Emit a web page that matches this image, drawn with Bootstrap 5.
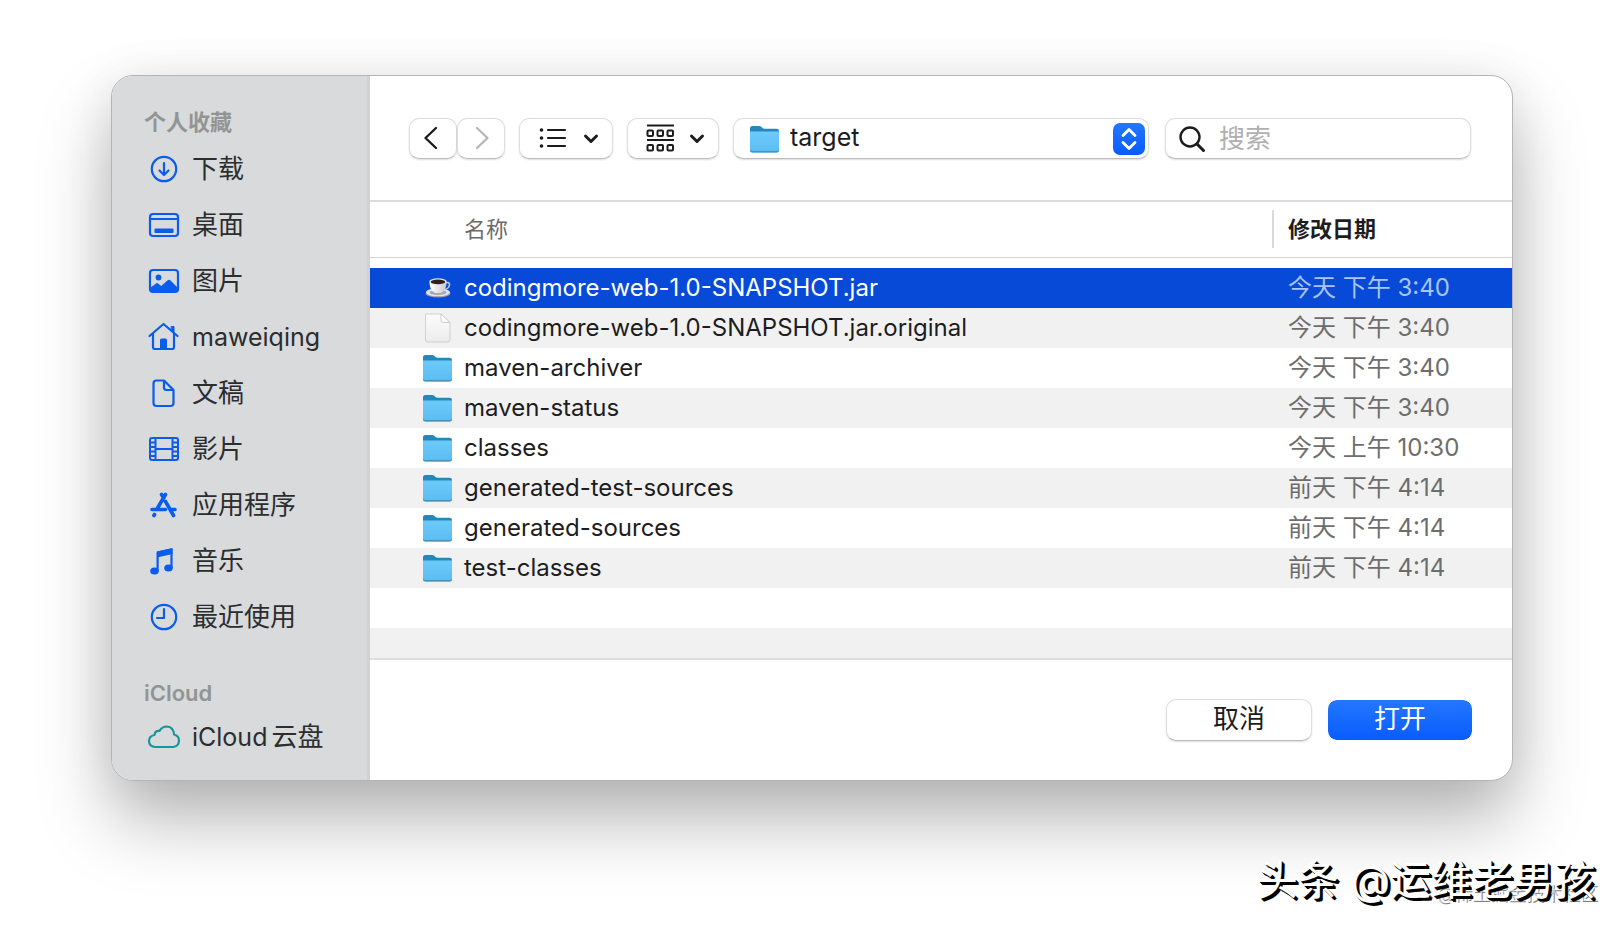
<!DOCTYPE html>
<html lang="zh-CN">
<head>
<meta charset="utf-8">
<meta name="viewport" content="width=device-width, initial-scale=1">
<title>target</title>
<link href="https://cdn.jsdelivr.net/npm/bootstrap@5.3.0/dist/css/bootstrap.min.css" rel="stylesheet">
<style>
  body { font-family: Inter, "Noto Sans CJK SC", sans-serif; font-size: 24px; line-height: 40px; color: #1d1d1f; background: #fff; }
  .stage { padding: 75px 111px 20px; }
  .dialog { border-radius: 22px; background: #fff; overflow: hidden; border: 1px solid #b4b4b5; box-shadow: 0 40px 72px rgba(0,0,0,.28), 0 4px 50px rgba(0,0,0,.08); }

  /* Sidebar */
  .side { flex: 0 0 258px; background: #d8dadb; border-right: 3px solid #d0d2d3; padding: 28px 0 14px 32px; }
  .side h2 { font-size: 22px; line-height: 37px; font-weight: 700; color: #929495; margin: 0; }
  .side h2.latin { font-weight: 600; padding-top: 31px; line-height: 34px; }
  .side a { display: flex; align-items: center; height: 56px; color: #2c2d2e; text-decoration: none; font-size: 26px; }
  .side h2.latin + a { height: 54px; }
  .side a .en { font-size: 25px; }
  .side svg { width: 38px; height: 32px; margin-right: 10px; color: #0a5cec; flex: none; }
  .side .cloud { color: #16979d; }

  /* Main pane */
  .pane { min-width: 0; }
  .tools { padding: 42px 41px 41px 39px; gap: 14px; }
  .ctl { height: 41px; border: 1px solid #dedede; border-bottom-color: #bcbcbc; border-radius: 10px; background: #fff; box-shadow: 0 1px 2px rgba(0,0,0,.14); padding: 0; color: #1c1c1c; display: flex; align-items: center; justify-content: center; }
  .nav-step { width: 48px; }
  .view-list { width: 94px; gap: 16px; padding-left: 6px; }
  .view-group { width: 92px; gap: 14px; padding-left: 4px; }
  .place { flex: 1 1 auto; position: relative; }
  .place select { appearance: none; width: 100%; height: 100%; border: 0; border-radius: 10px; background: transparent; padding: 0 48px 3px 56px; font-size: 25px; line-height: 36px; color: inherit; }
  .place .folder { position: absolute; left: 14px; top: 5px; pointer-events: none; }
  .place .stepper { position: absolute; right: 3px; top: 4px; pointer-events: none; }
  .find { flex: 0 0 306px; min-width: 0; margin-left: 2px; justify-content: flex-start; padding-left: 12px; gap: 13px; }
  .find input { border: 0; background: transparent; flex: 1 1 0; min-width: 0; height: 38px; padding: 0; font-size: 26px; color: inherit; }
  .find input::placeholder { color: #b0b0b0; opacity: 1; }

  /* File list */
  .listing { border-top: 2px solid #dbdbdb; border-bottom: 2px solid #dedede; }
  .files { width: 100%; table-layout: fixed; border-collapse: separate; border-spacing: 0; }
  .files .date-col { width: 240px; }
  .files th { height: 56px; border-bottom: 1px solid #d4d4d4; font-size: 22px; line-height: 38px; padding: 0 0 2px; font-weight: 400; color: #6b6b6b; vertical-align: middle; }
  .files th:first-child { padding-left: 94px; }
  .files th.sorted { font-weight: 700; color: #1d1d1f; }
  .files th.sorted span { display: block; border-left: 2px solid #dadada; padding-left: 14px; }
  .files tbody::before { content: ""; display: block; height: 10px; }
  .files td { height: 40px; padding: 0; line-height: 38px; font-size: 24px; white-space: nowrap; }
  .files td:first-child { padding-left: 51px; }
  .files td:last-child { padding-left: 16px; color: #6d6d6d; }
  .files tbody tr:nth-child(even) td { background: #f1f1f1; }
  .files tr.picked td, .files tr.picked td:last-child { background: #084ad8; color: #fff; }
  .files tr.picked td:last-child { color: #a9c5fb; }
  .files tr.cut td { height: 30px; }
  .files svg { width: 34px; height: 30px; margin-right: 9px; flex: none; }

  /* Footer */
  .actions { padding: 39px 39px 39px; gap: 15px; }
  .act { width: 146px; height: 42px; font-size: 26px; line-height: 36px; padding-bottom: 2px; }
  .act.main-act { border: 1px solid #fff; background-clip: padding-box; color: #fff; background-image: linear-gradient(#2477ff, #085cff); background-color: #085cff; box-shadow: none; }

  .mark-big { position: absolute; right: 29px; bottom: 18px; font-size: 41px; line-height: 60px; color: #fff; text-shadow: 1px 1px 0 #000, 2px 2px 0 #000, 3px 3px 0 #000; white-space: nowrap; }
  .mark-fine { position: absolute; right: 26px; bottom: 22px; font-size: 18px; line-height: 24px; color: rgba(255,255,255,.6); text-shadow: 1px 1px 0 rgba(0,0,0,.5); white-space: nowrap; }
</style>
</head>
<body>
<svg width="0" height="0" class="position-absolute" aria-hidden="true">
  <defs>
    <linearGradient id="fold" x1="0" y1="0" x2="0" y2="1"><stop offset="0" stop-color="#6ccbfb"/><stop offset="1" stop-color="#5bbcf2"/></linearGradient>
    <linearGradient id="paper" x1="0" y1="0" x2="0" y2="1"><stop offset="0" stop-color="#fbfbfb"/><stop offset="1" stop-color="#ececec"/></linearGradient>
    <linearGradient id="china" x1="0" y1="0" x2="1" y2="0"><stop offset="0" stop-color="#fff"/><stop offset="1" stop-color="#c9c9cf"/></linearGradient>
    <symbol id="i-folder" viewBox="0 0 34 30">
      <path d="M2 4.500Q2 2 4.500 2h6.500q1.500 0 2.500 1l1 1q.8.700 2 .700H28.500Q31 4.700 31 7v8H2z" fill="#2787bd"/>
      <path d="M2 7.500H31V26q0 2.500-2.500 2.500h-24Q2 28.500 2 26z" fill="url(#fold)"/>
      <path d="M2 25.500v.7q0 2.300 2.500 2.300h24Q31 28.500 31 26.200v-.7q-.5 1.500-2.500 1.500h-24Q2.500 27 2 25.500z" fill="#4593bb"/>
    </symbol>
    <symbol id="i-paper" viewBox="0 0 34 30">
      <path d="M4.500 1H20l9 8.500V27q0 2-2 2H6.500q-2 0-2-2z" fill="url(#paper)" stroke="#c8c8c8" stroke-width=".8"/>
      <path d="M20 1v6.500q0 2 2 2h7z" fill="#fff" stroke="#c4c4c4" stroke-width=".8"/>
    </symbol>
    <symbol id="i-cup" viewBox="0 0 34 30">
      <ellipse cx="17" cy="20.500" rx="12.500" ry="4" fill="#8f94a8"/>
      <ellipse cx="17" cy="19.300" rx="12" ry="4" fill="#e2e3e8"/>
      <ellipse cx="17" cy="19.600" rx="8.500" ry="2.500" fill="#a6a8b2"/>
      <path d="M24 10q5-1.500 4.500 2-.5 4-6 4.500" fill="none" stroke="#c5c8d4" stroke-width="1.600"/>
      <path d="M8.500 9q0 8.500 5.500 11h6q5.500-2.500 5.500-11z" fill="url(#china)"/>
      <ellipse cx="17" cy="8.500" rx="8.700" ry="3.300" fill="#e2e2e5"/>
      <ellipse cx="17" cy="8.900" rx="7.200" ry="2.400" fill="#2f1d18"/>
    </symbol>
    <symbol id="i-chev" viewBox="0 0 16 12"><path d="M2.500 3 8 8.500 13.500 3" fill="none" stroke="currentColor" stroke-width="3" stroke-linecap="round" stroke-linejoin="round"/></symbol>
  </defs>
</svg>

<main class="stage position-relative min-vh-100">
  <div class="dialog d-flex" role="dialog" aria-label="打开">
    <nav class="side" aria-label="位置">
      <h2>个人收藏</h2>
      <a href="#"><svg viewBox="0 0 38 32" fill="none" stroke="currentColor" stroke-width="2.200" stroke-linecap="round" stroke-linejoin="round"><circle cx="20" cy="16" r="12.200"/><path d="M20 10v11.500M15.500 17.500 20 22l4.500-4.500"/></svg>下载</a>
      <a href="#"><svg viewBox="0 0 38 32" fill="none" stroke="currentColor" stroke-width="2.200" stroke-linejoin="round"><rect x="6" y="5" width="28" height="22" rx="3"/><path d="M6 10h28"/><rect x="10.500" y="19.500" width="19" height="4.500" rx="1" fill="currentColor" stroke="none"/></svg>桌面</a>
      <a href="#"><svg viewBox="0 0 38 32" fill="none" stroke="currentColor" stroke-width="2.200"><rect x="6" y="5" width="28" height="22" rx="3"/><circle cx="14.500" cy="12.500" r="2.900" fill="currentColor" stroke="none"/><path d="M6 23l6-4.500q1.200-.8 2.200 0l3 2.500 6.500-5.700q1.300-1 2.600 0L34 23v2q0 2-2 2H8q-2 0-2-2z" fill="currentColor" stroke="none"/></svg>图片</a>
      <a href="#"><svg viewBox="0 0 38 32" fill="none" stroke="currentColor" stroke-width="2.200" stroke-linecap="round" stroke-linejoin="round"><path d="M5.500 15 19.500 3l14 12M9 13v13q0 2 2 2h17q2 0 2-2V13"/><path d="M27.500 5.500h2.500v6l-2.500-2z" fill="currentColor" stroke-width="1"/><path d="M16 28v-9q0-1.500 1.500-1.500h4q1.500 0 1.500 1.500v9z" fill="currentColor" stroke="none"/></svg><span class="en">maweiqing</span></a>
      <a href="#"><svg viewBox="0 0 38 32" fill="none" stroke="currentColor" stroke-width="2.200" stroke-linejoin="round"><path d="M12.500 3.500h7.500l9.500 9.500v13q0 3-3 3h-14q-3 0-3-3v-19.500q0-3 3-3z"/><path d="M20 3.500v7q0 2.500 2.500 2.500h7"/></svg>文稿</a>
      <a href="#"><svg viewBox="0 0 38 32" fill="none" stroke="currentColor" stroke-width="2"><rect x="6" y="5" width="28" height="22" rx="2"/><path d="M11.500 5v22M28.500 5v22M11.500 16h17M6 9.500h5.500M6 14h5.500M6 18.500h5.500M6 23h5.500M28.500 9.500H34M28.500 14H34M28.500 18.500H34M28.500 23H34"/></svg>影片</a>
      <a href="#"><svg viewBox="0 0 38 32" fill="none" stroke="currentColor" stroke-width="3.600" stroke-linecap="round"><path d="M21.500 5.500 13 20M17.500 5.500l2.200 3.500M21.500 12.500 29.500 26.500M8 20.500h13.500M27.500 20.500H31M10.500 25.500l-.6 1"/></svg>应用程序</a>
      <a href="#"><svg viewBox="0 0 38 32" fill="none" stroke="currentColor" stroke-width="2.200"><path d="M13.600 26V7.500L27.500 4.500V23" stroke-linejoin="round"/><path d="M13 6.500 28.500 3v6L13 12.500z" fill="currentColor" stroke="none"/><ellipse cx="10.500" cy="26" rx="4.300" ry="3.600" fill="currentColor" stroke="none"/><ellipse cx="24.500" cy="23" rx="4.300" ry="3.600" fill="currentColor" stroke="none"/></svg>音乐</a>
      <a href="#"><svg viewBox="0 0 38 32" fill="none" stroke="currentColor" stroke-width="2.200" stroke-linecap="round" stroke-linejoin="round"><circle cx="20" cy="16" r="12.200"/><path d="M20 8v9h-7"/></svg>最近使用</a>
      <h2 class="latin">iCloud</h2>
      <a href="#"><svg class="cloud" viewBox="0 0 38 32" fill="none" stroke="currentColor" stroke-width="2.200" stroke-linejoin="round"><path d="M11.500 26q-6.500-.3-6.500-6 0-5 5.500-6 .5-4.500 5-4 2.500-4.500 7.500-4.500 6.500.5 7 8 5 1 5 6.300-.3 5.700-6 6.200z"/></svg><span class="en">iCloud</span><span class="ms-1">云盘</span></a>
    </nav>

    <section class="pane flex-grow-1 d-flex flex-column">
      <div class="tools d-flex align-items-center">
        <div class="d-flex">
          <button class="ctl nav-step" type="button" aria-label="后退"><svg width="20" height="26" viewBox="0 0 20 26" fill="none" stroke="currentColor" stroke-width="2.400" stroke-linecap="round" stroke-linejoin="round"><path d="M13 2 2.500 12 13 22"/></svg></button>
          <button class="ctl nav-step" type="button" aria-label="前进" disabled><svg width="20" height="26" viewBox="0 0 20 26" fill="none" stroke="#b5b5b5" stroke-width="2.200" stroke-linecap="round" stroke-linejoin="round"><path d="M6 2 16.500 12 6 22"/></svg></button>
        </div>
        <button class="ctl view-list" type="button" aria-label="列表显示"><svg width="28" height="24" viewBox="0 0 28 24" fill="none" stroke="currentColor" stroke-width="2.200" stroke-linecap="round"><path d="M9 3h17M9 11h17M9 19h17"/><g fill="currentColor" stroke="none"><circle cx="2.500" cy="3" r="1.800"/><circle cx="2.500" cy="11" r="1.800"/><circle cx="2.500" cy="19" r="1.800"/></g></svg><svg width="16" height="12"><use href="#i-chev"/></svg></button>
        <button class="ctl view-group" type="button" aria-label="分组方式"><svg width="30" height="30" viewBox="0 0 30 30" fill="none" stroke="currentColor" stroke-width="2"><path d="M2 1.500h27M2 16h27"/><rect x="2.500" y="6.500" width="5.500" height="5.500" rx="1"/><rect x="12.500" y="6.500" width="5.500" height="5.500" rx="1"/><rect x="22.500" y="6.500" width="5.500" height="5.500" rx="1"/><rect x="2.500" y="21" width="5.500" height="5.500" rx="1"/><rect x="12.500" y="21" width="5.500" height="5.500" rx="1"/><rect x="22.500" y="21" width="5.500" height="5.500" rx="1"/></svg><svg width="16" height="12"><use href="#i-chev"/></svg></button>
        <div class="ctl place">
          <svg class="folder" width="34" height="30" aria-hidden="true"><use href="#i-folder"/></svg>
          <select aria-label="文件夹"><option>target</option></select>
          <svg class="stepper" width="32" height="32" viewBox="0 0 32 32" aria-hidden="true"><defs><linearGradient id="blue" x1="0" y1="0" x2="0" y2="1"><stop offset="0" stop-color="#2477ff"/><stop offset="1" stop-color="#085cff"/></linearGradient></defs><rect width="32" height="32" rx="7" fill="url(#blue)"/><path d="M10 12.500 16 6.500l6 6M10 19.500l6 6 6-6" fill="none" stroke="#fff" stroke-width="2.800" stroke-linecap="round" stroke-linejoin="round"/></svg>
        </div>
        <label class="ctl find"><svg width="28" height="28" viewBox="0 0 28 28" fill="none" stroke="currentColor" stroke-width="2.400" stroke-linecap="round"><circle cx="12" cy="12" r="9.500"/><path d="M19 19l6.500 6.500" stroke-width="3"/></svg><input type="search" placeholder="搜索" aria-label="搜索"></label>
      </div>

      <div class="listing">
        <table class="files">
          <colgroup><col><col class="date-col"></colgroup>
          <thead><tr><th scope="col">名称</th><th scope="col" class="sorted"><span>修改日期</span></th></tr></thead>
          <tbody>
            <tr class="picked"><td><div class="d-flex align-items-center"><svg><use href="#i-cup"/></svg>codingmore-web-1.0-SNAPSHOT.jar</div></td><td>今天 下午 3:40</td></tr>
            <tr><td><div class="d-flex align-items-center"><svg><use href="#i-paper"/></svg>codingmore-web-1.0-SNAPSHOT.jar.original</div></td><td>今天 下午 3:40</td></tr>
            <tr><td><div class="d-flex align-items-center"><svg><use href="#i-folder"/></svg>maven-archiver</div></td><td>今天 下午 3:40</td></tr>
            <tr><td><div class="d-flex align-items-center"><svg><use href="#i-folder"/></svg>maven-status</div></td><td>今天 下午 3:40</td></tr>
            <tr><td><div class="d-flex align-items-center"><svg><use href="#i-folder"/></svg>classes</div></td><td>今天 上午 10:30</td></tr>
            <tr><td><div class="d-flex align-items-center"><svg><use href="#i-folder"/></svg>generated-test-sources</div></td><td>前天 下午 4:14</td></tr>
            <tr><td><div class="d-flex align-items-center"><svg><use href="#i-folder"/></svg>generated-sources</div></td><td>前天 下午 4:14</td></tr>
            <tr><td><div class="d-flex align-items-center"><svg><use href="#i-folder"/></svg>test-classes</div></td><td>前天 下午 4:14</td></tr>
            <tr><td></td><td></td></tr>
            <tr class="cut"><td></td><td></td></tr>
          </tbody>
        </table>
      </div>

      <div class="actions d-flex justify-content-end">
        <button class="ctl act" type="button">取消</button>
        <button class="ctl act main-act" type="button">打开</button>
      </div>
    </section>
  </div>
  <div class="mark-fine">@稀土掘金技术社区</div>
  <div class="mark-big">头条 @运维老男孩</div>
</main>
<script src="https://cdn.jsdelivr.net/npm/bootstrap@5.3.0/dist/js/bootstrap.bundle.min.js"></script>
</body>
</html>
